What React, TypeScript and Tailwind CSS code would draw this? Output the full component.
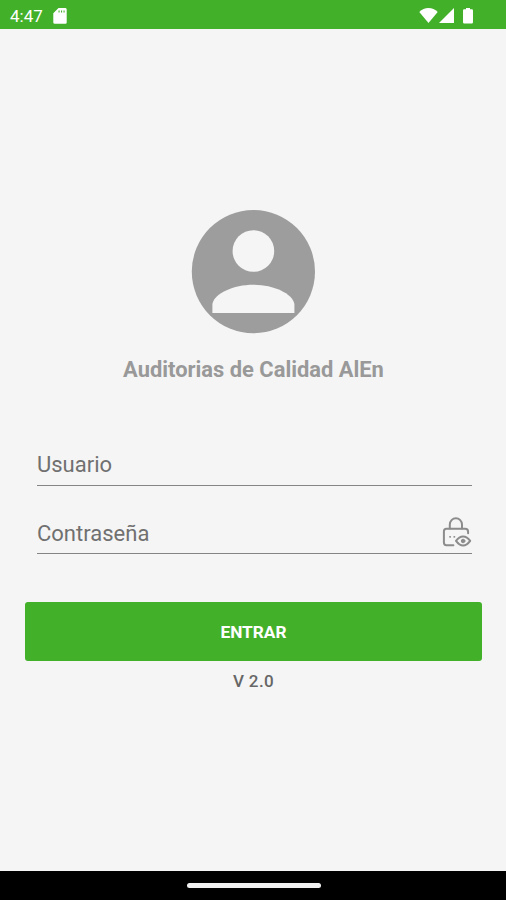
import { ReactNode } from "react";

type FieldProps = {
  id: string;
  type: string;
  label: string;
  className?: string;
  children?: ReactNode;
};

const StatusBar = () => {
  return (
    <header className="flex h-[29px] shrink-0 items-center bg-[#43b02a] pt-0.5 pl-2.5 pr-8 text-white">
      <span className="w-[43px] pt-px text-[17px] leading-none">4:47</span>
      <svg width="14" height="16" viewBox="0 0 14 16" fill="currentColor">
        <path
          fillRule="evenodd"
          d="M5.5 0H12.5Q13.7 0 13.7 1.5V14.5Q13.7 15.8 12.5 15.8H1.8Q.3 15.8 .3 14.5V5.2ZM5.5 2.5V4.5H6.6V2.5ZM8 2.5V4.5H9.1V2.5ZM10.5 2.5V4.5H11.6V2.5Z"
        />
      </svg>
      <div className="ml-auto flex items-center">
        <svg width="19" height="16" viewBox="0 0 19 16" fill="currentColor">
          <path d="M9.5 15L.3 4Q4.2 0 9.5 0T18.7 4Z" />
        </svg>
        <svg width="16" height="16" viewBox="0 0 16 16" fill="currentColor" className="ml-px">
          <path d="M15 0V15H0Z" />
        </svg>
        <svg width="10" height="16" viewBox="0 0 10 16" fill="currentColor" className="ml-2 mr-px">
          <path d="M3 0H7V1.2H8.8Q10 1.2 10 2.4V14.2Q10 15.4 8.8 15.4H1.2Q0 15.4 0 14.2V2.4Q0 1.2 1.2 1.2H3Z" />
        </svg>
      </div>
    </header>
  );
};

const Avatar = () => {
  return (
    <svg width="124" height="124" viewBox="0 0 124 124" className="shrink-0">
      <circle cx="62.4" cy="61.6" r="61.6" fill="#9d9d9d" />
      <circle cx="62.4" cy="41" r="20.8" fill="#f5f5f5" />
      <path d="M21.4 103V94C23.4 83.5 42.4 74.8 62.4 74.8S101.4 83.5 103.4 94V103Z" fill="#f5f5f5" />
    </svg>
  );
};

const LockEyeIcon = () => {
  return (
    <svg
      width="30"
      height="32"
      viewBox="0 0 30 32"
      fill="none"
      stroke="#8c8c8c"
      strokeWidth="2"
      strokeLinecap="round"
      className="mb-1"
    >
      <path d="M7.8 12.5V8.4A6.1 6.1 0 0 1 20 8.4V12.5" />
      <path d="M11.4 29.3H4.4Q1.9 29.3 1.9 26.6V15.5Q1.9 12.8 4.4 12.8H23.2Q26.1 12.8 26.1 15.8V17.2" />
      <path
        d="M14 24.9Q17.2 20.5 21.1 20.5T28.2 24.9Q24.8 29.5 21.1 29.5T14 24.9Z"
        strokeLinejoin="round"
      />
      <circle cx="21.1" cy="25" r="1.8" fill="#8c8c8c" strokeWidth="1" />
      <path d="M8 20.8H8.2M12.2 20.8H12.4" strokeWidth="1.8" />
    </svg>
  );
};

const Field = ({ id, type, label, className, children }: FieldProps) => {
  return (
    <div className={`flex items-center border-b-[1.5px] border-[#858585] ${className}`}>
      <label htmlFor={id} className="text-[22px] leading-none text-[#707070]">
        {label}
      </label>
      <input id={id} name={id} type={type} className="min-w-0 flex-1 bg-transparent outline-none" />
      {children}
    </div>
  );
};

const App = () => {
  return (
    <div className="flex h-[900px] w-full flex-col bg-[#f5f5f5] font-['Roboto',sans-serif]">
      <StatusBar />
      <main className="flex flex-1 flex-col items-center pt-[181px]">
        <Avatar />
        <h1 className="mt-[22px] ml-px whitespace-nowrap text-[21.9px] leading-7 font-bold text-[#999]">
          Auditorias de Calidad AlEn
        </h1>
        <form className="mt-[61px] flex w-full flex-col px-6">
          <Field id="usuario" type="text" label="Usuario" className="mr-2.5 ml-[13px] h-[41px]" />
          <Field id="clave" type="password" label="Contraseña" className="mr-2.5 ml-[13px] mt-7 h-10">
            <LockEyeIcon />
          </Field>
          <button
            type="button"
            className="mt-12 ml-px h-[59px] w-[457px] rounded-[3px] bg-[#43b02a] pt-0.5 text-[17.3px] font-bold text-white"
          >
            ENTRAR
          </button>
        </form>
        <p className="mt-2 ml-px text-[17px] leading-6 font-medium tracking-[0.4px] text-[#666]">V 2.0</p>
      </main>
      <footer className="flex h-[29px] shrink-0 items-center justify-center bg-black">
        <div className="ml-px h-[5px] w-[134px] rounded-full bg-[#f0f0f0]" />
      </footer>
    </div>
  );
};

export default App;
